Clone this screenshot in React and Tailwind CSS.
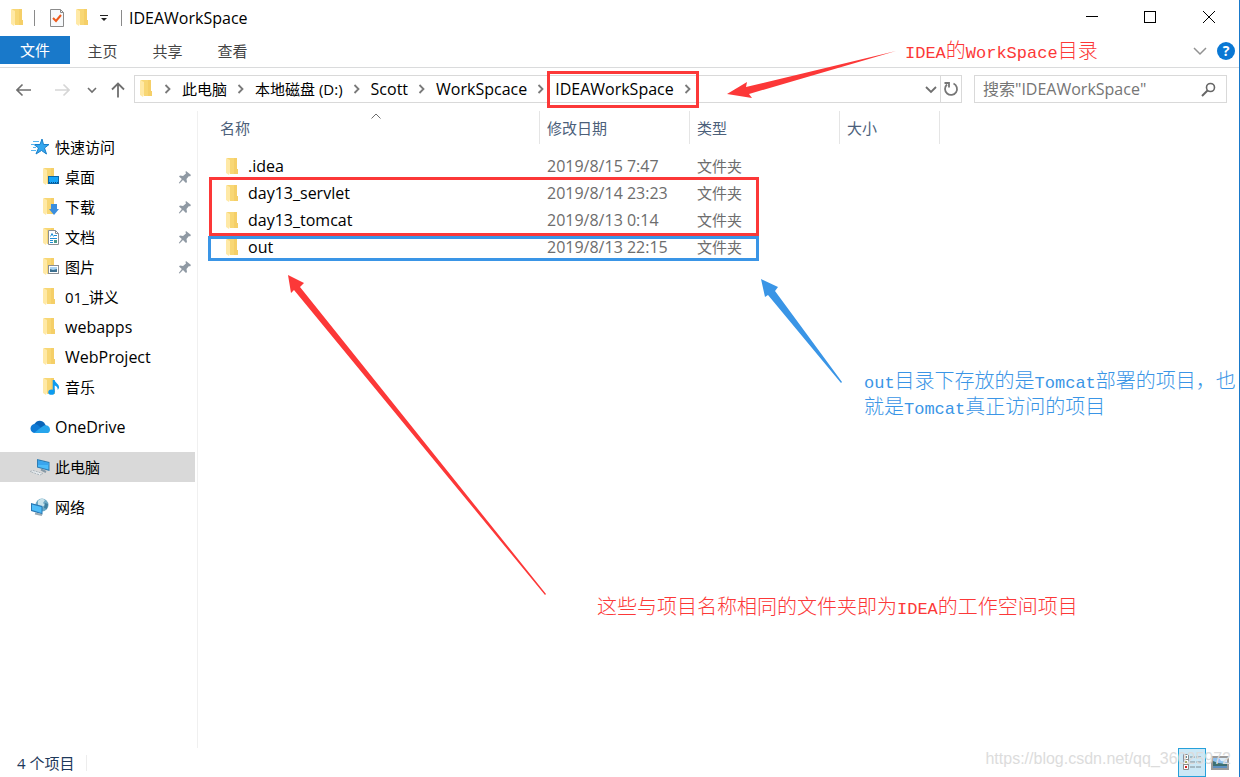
const quickAccess = [
    { name: "桌面", overlay: "desktop", pinned: true },
    { name: "下载", overlay: "download", pinned: true },
    { name: "文档", overlay: "document", pinned: true },
    { name: "图片", overlay: "picture", pinned: true },
    { name: "01_讲义" },
    { name: "webapps", latin: true },
    { name: "WebProject", latin: true },
    { name: "音乐", overlay: "music" },
];

const crumbs = [
    { name: "此电脑" },
    { name: "本地磁盘 (D:)" },
    { name: "Scott", latin: true },
    { name: "WorkSpcace", latin: true },
    { name: "IDEAWorkSpace", latin: true },
];

const files = [
    { name: ".idea", date: "2019/8/15 7:47", type: "文件夹" },
    { name: "day13_servlet", date: "2019/8/14 23:23", type: "文件夹" },
    { name: "day13_tomcat", date: "2019/8/13 0:14", type: "文件夹" },
    { name: "out", date: "2019/8/13 22:15", type: "文件夹" },
];

function FolderIcon({ overlay }) {
    return (
        <svg width="18" height="18" viewBox="0 0 18 18" className="shrink-0" aria-hidden="true">
            <path d="M1 0h10v11l1 1v4H4z" fill="#f8d775" />
            <path d="M8 0h3v11h1v5H8z" fill="#f5cf68" />
            <path d="M0 0l4 2v12l-1 3-3-2z" fill="#ffe9a6" />
            {overlay === "desktop" && (
                <g>
                    <rect x="5.5" y="8.5" width="10" height="7" fill="#18a5f7" stroke="#0b66a8" />
                    <path d="M6 14.5h9" stroke="#0b4f86" strokeDasharray="1 1" />
                </g>
            )}
            {overlay === "download" && <path d="M8 6h6v5h2l-5 6-5-6h2z" fill="#3b8ede" />}
            {overlay === "document" && (
                <g>
                    <path d="M5.5 2.5h7l3 3v11h-10z" fill="#fff" stroke="#8a8f94" />
                    <path d="M12.5 2.5v3h3" fill="none" stroke="#8a8f94" />
                    <path d="M7.5 8.5l1.5-3 1.5 3M11 7.5h3M7 10.5h7M7 12.5h3" fill="none" stroke="#1f8fd6" />
                    <path d="M11 12h3v3h-3z" fill="#4d9b8b" />
                    <path d="M7 14.5h3" stroke="#1f8fd6" />
                </g>
            )}
            {overlay === "picture" && (
                <g>
                    <rect x="5.5" y="7.5" width="10" height="8" fill="#fff" stroke="#8a8f94" />
                    <path d="M7 9h7v5H7z" fill="#a9d3f2" />
                    <path d="M7 11l3 1 4-1v3H7z" fill="#3c6f8f" />
                </g>
            )}
            {overlay === "music" && (
                <g fill="#0c9bf0">
                    <ellipse cx="8.5" cy="14.2" rx="3.2" ry="2.6" />
                    <path d="M9.7 2h2c.3 3 5 4 4.300 8l-1.200 2c0-3-1.800-4-3.100-4.500V14h-2z" />
                </g>
            )}
        </svg>
    );
}

function PinIcon() {
    return (
        <svg width="14" height="14" viewBox="0 0 14 14" className="shrink-0" aria-hidden="true">
            <path d="M8 1l5 4-1 1.5-1-.5-2.500 3 .5 3-1 1-3-3L1.500 13.500.8 13l3-4L1 6.500l1-1 3 .5 3-2.500L7.500 2z" fill="#8f99a3" />
        </svg>
    );
}

function StarIcon() {
    return (
        <svg width="20" height="18" viewBox="0 0 20 18" className="shrink-0" aria-hidden="true">
            <path d="M12 1l1.500 5.500H19l-4.500 3.500 2 6-5-3.500L6 16l2.500-6L4 6.500h6z" fill="#35a7ee" stroke="#1a7fc9" />
            <path d="M3 3.500h6M1 6.500h4M3 9.500h3M1 12.500h5" stroke="#56b4ef" />
        </svg>
    );
}

function CloudIcon() {
    return (
        <svg width="20" height="14" viewBox="0 0 20 14" className="shrink-0" aria-hidden="true">
            <path d="M4 5C6 0 12-1 15 4l1 2-6 3-8 1z" fill="#0a64b8" />
            <path d="M5 13a4.500 4.500 0 0 1 0-9c2 0 3 1 5 3l5 5z" fill="#0f7ad4" />
            <path d="M11 7.500l3-2c3-1 6 1 6 4s-2 3.500-3 3.500H4z" fill="#27a5ec" />
        </svg>
    );
}

function ComputerIcon() {
    return (
        <svg width="20" height="18" viewBox="0 0 20 18" className="shrink-0" aria-hidden="true">
            <path d="M7 1l12.500 3v9L7 9.500z" fill="#2f7db3" />
            <path d="M8 2.500l10.500 2.500v6.500L8 8.800z" fill="#4cbcfa" />
            <path d="M8 2.500l10.500 2.500v2L8 7z" fill="#3aa5ee" />
            <path d="M11 11.500l5 2.500" stroke="#8799a6" strokeWidth="2" />
            <path d="M0 13.500l3-1 10 3-3 1.500z" fill="#e9eef1" stroke="#aab4bb" strokeDasharray="2 1" />
        </svg>
    );
}

function NetworkIcon() {
    return (
        <svg width="20" height="18" viewBox="0 0 20 18" className="shrink-0" aria-hidden="true">
            <circle cx="12" cy="7" r="6.500" fill="#6da9c4" />
            <path d="M8 3c2-3 6-2 7-1l-2 3 2 2-3 2-4-2z" fill="#c8e2ea" />
            <path d="M15 5l3 1-1 5-3-1z" fill="#3f7f9f" />
            <path d="M1 5l11.500 3v8.500L1 13z" fill="#2878b4" />
            <path d="M2 6.500l9.500 2.500v6L2 12z" fill="#4fbdf8" />
            <path d="M5 15.500l7 1.500" stroke="#98a9b4" strokeWidth="2" />
        </svg>
    );
}

function Chevron({ className = "" }) {
    return (
        <svg width="28" height="12" viewBox="0 0 28 12" className={`shrink-0 ${className}`} fill="none" aria-hidden="true">
            <path d="M11.500 2l4 4-4 4" stroke="#7a7a7a" strokeWidth="1.800" />
        </svg>
    );
}

function TitleBar() {
    return (
        <header className="flex h-9 items-center">
            <div className="flex flex-1 items-center pb-px pl-[11px]">
                <FolderIcon />
                <span className="ml-[5px] h-4 w-px bg-[#8a8a8a]" />
                <button aria-label="属性" className="ml-[14px]">
                    <svg width="16" height="18" viewBox="0 0 16 18" fill="none">
                        <path d="M1.500.5h10l3 3v14h-13z" fill="#f7f9fb" stroke="#8b8b8b" />
                        <path d="M11.500.5v3h3" stroke="#8b8b8b" />
                        <path d="M4 9l3 3 5-6" stroke="#ee5a1c" strokeWidth="2" />
                    </svg>
                </button>
                <button aria-label="新建文件夹" className="ml-[11px]"><FolderIcon /></button>
                <button aria-label="自定义快速访问工具栏" className="ml-[5px]">
                    <svg width="10" height="10" viewBox="0 0 10 10">
                        <path d="M1 2.500h8" stroke="#222" />
                        <path d="M2 5h6L5 8z" fill="#222" />
                    </svg>
                </button>
                <span className="ml-3 h-4 w-px bg-[#8a8a8a]" />
                <h1 className="ml-[7px] text-base">IDEAWorkSpace</h1>
            </div>
            <div className="flex h-full">
                <button aria-label="最小化" className="flex w-[58px] items-center justify-center">
                    <svg width="12" height="12" viewBox="0 0 12 12"><path d="M0 4.500h12" stroke="#000" /></svg>
                </button>
                <button aria-label="最大化" className="flex w-[58px] items-center justify-center pb-[2px]">
                    <svg width="12" height="12" viewBox="0 0 12 12"><rect x=".5" y=".5" width="11" height="11" fill="none" stroke="#000" /></svg>
                </button>
                <button aria-label="关闭" className="flex w-[60px] items-center justify-center pb-[2px]">
                    <svg width="12" height="12" viewBox="0 0 12 12"><path d="M0 0l12 12M12 0L0 12" stroke="#000" /></svg>
                </button>
            </div>
        </header>
    );
}

function RibbonTabs() {
    return (
        <div className="flex h-8 items-start border-b border-[#dadbdc]">
            <button className="h-7 w-[70px] bg-[#1979ca] text-white">文件</button>
            {["主页", "共享", "查看"].map((t) => (
                <button key={t} className="h-[30px] w-[65px] text-[#444]">{t}</button>
            ))}
            <button aria-label="展开功能区" className="mt-2 mr-[10px] ml-auto">
                <svg width="14" height="14" viewBox="0 0 14 14" fill="none"><path d="M1 4l6 6 6-6" stroke="#929292" strokeWidth="1.500" /></svg>
            </button>
            <button aria-label="帮助" className="mt-[6px] mr-1 flex size-[18px] items-center justify-center rounded-full bg-[#0a78d4] text-sm font-bold text-white">?</button>
        </div>
    );
}

function AddressRow() {
    return (
        <div className="flex h-[43px] items-center pr-3 pb-px pl-4">
            <div className="flex w-[118px] shrink-0 items-center pt-[2px] text-[#6f6f6f]">
                <button aria-label="后退">
                    <svg width="16" height="14" viewBox="0 0 16 14" fill="none"><path d="M15 7H1M6.500 1.500L1 7l5.500 5.500" stroke="currentColor" strokeWidth="1.600" /></svg>
                </button>
                <button aria-label="前进" className="ml-[22px] text-[#d6d6d6]">
                    <svg width="16" height="14" viewBox="0 0 16 14" fill="none"><path d="M1 7h14M9.500 1.500L15 7l-5.500 5.500" stroke="currentColor" strokeWidth="1.600" /></svg>
                </button>
                <button aria-label="最近浏览的位置" className="ml-[17px]">
                    <svg width="10" height="10" viewBox="0 0 10 10" fill="none"><path d="M1 3l4 4 4-4" stroke="currentColor" strokeWidth="1.600" /></svg>
                </button>
                <button aria-label="上移" className="ml-[13px]">
                    <svg width="16" height="16" viewBox="0 0 16 16" fill="none"><path d="M8 15.500V1.500M2 7.500l6-6 6 6" stroke="currentColor" strokeWidth="1.800" /></svg>
                </button>
            </div>
            <nav aria-label="地址" className="flex h-7 flex-1 items-center border border-[#d9d9d9] pl-[5px]">
                <FolderIcon />
                <Chevron className="-ml-1" />
                {crumbs.map((c) => (
                    <div key={c.name} className="flex items-center">
                        <button className={`whitespace-nowrap ${c.latin ? "text-base" : ""}`}>{c.name}</button>
                        <Chevron />
                    </div>
                ))}
                <button aria-label="以前的位置" className="mr-[3px] ml-auto">
                    <svg width="12" height="12" viewBox="0 0 12 12" fill="none"><path d="M1 4l5 5 5-5" stroke="#6f6f6f" strokeWidth="1.800" /></svg>
                </button>
                <button aria-label="刷新" className="flex h-full w-[21px] items-center justify-center border-l border-[#d9d9d9]">
                    <svg width="16" height="16" viewBox="0 0 16 16" fill="none">
                        <path d="M10.500 2.500A6 6 0 1 1 4 3.500" stroke="#767676" strokeWidth="1.800" />
                        <path d="M1.500 2h4.500v4.500" stroke="#767676" strokeWidth="1.800" />
                    </svg>
                </button>
            </nav>
            <label className="ml-3 flex h-7 w-[253px] items-center border border-[#d9d9d9] pr-[10px] pl-2">
                <input aria-label="搜索" placeholder={'搜索"IDEAWorkSpace"'} className="min-w-0 flex-1 text-base outline-none placeholder:text-[#757575]" />
                <svg width="15" height="15" viewBox="0 0 15 15" fill="none">
                    <circle cx="9.500" cy="5.500" r="4" stroke="#666" strokeWidth="1.600" />
                    <path d="M6.500 8.500L1 14" stroke="#666" strokeWidth="2" />
                </svg>
            </label>
        </div>
    );
}

function Sidebar() {
    return (
        <aside className="w-[198px] shrink-0 border-r border-[#f0f0f0] pt-[21px]">
            <a href="#quick" className="flex h-[30px] items-center gap-[5px] pl-[30px]"><StarIcon />快速访问</a>
            <ul>
                {quickAccess.map((q) => (
                    <li key={q.name}>
                        <a href="#folder" className="flex h-[30px] items-center pr-[5px] pl-[43px]">
                            <FolderIcon overlay={q.overlay} />
                            <span className={`ml-1 flex-1 ${q.latin ? "text-base" : ""}`}>{q.name}</span>
                            {q.pinned && <PinIcon />}
                        </a>
                    </li>
                ))}
            </ul>
            <a href="#onedrive" className="mt-[10px] flex h-[30px] items-center gap-[5px] pl-[30px] text-base"><CloudIcon />OneDrive</a>
            <a href="#pc" className="mt-[10px] mr-[2px] flex h-[30px] items-center gap-[5px] bg-[#d9d9d9] pl-[30px]"><ComputerIcon />此电脑</a>
            <a href="#network" className="mt-[10px] flex h-[30px] items-center gap-[5px] pl-[30px]"><NetworkIcon />网络</a>
        </aside>
    );
}

function FileTable() {
    const head = "h-[33px] border-r border-[#e5e5e5] leading-[34px]";
    return (
        <table className="w-[742px] table-fixed border-collapse self-start text-left">
            <thead className="text-[#4c607a]">
                <tr>
                    <th className="relative w-[342px] p-0 pb-[9px] font-normal">
                        <div className={`${head} pl-[22px]`}>名称</div>
                        <svg width="10" height="6" viewBox="0 0 10 6" fill="none" className="absolute top-[2px] left-[173px]">
                            <path d="M.5 5.500L5 1l4.500 4.500" stroke="#6d6d6d" />
                        </svg>
                    </th>
                    <th className="w-[150px] p-0 pb-[9px] font-normal"><div className={`${head} pl-[7px]`}>修改日期</div></th>
                    <th className="w-[150px] p-0 pb-[9px] font-normal"><div className={`${head} pl-[7px]`}>类型</div></th>
                    <th className="w-[100px] p-0 pb-[9px] font-normal"><div className={`${head} pl-[7px]`}>大小</div></th>
                </tr>
            </thead>
            <tbody>
                {files.map((f) => (
                    <tr key={f.name} className="h-[27px] leading-[27px] text-[#6d6d6d]">
                        <td className="p-0">
                            <div className="flex items-center pl-7 text-base leading-[27px] text-black">
                                <FolderIcon />
                                <span className="ml-1">{f.name}</span>
                            </div>
                        </td>
                        <td className="p-0 pl-[7px] text-base leading-[27px]">{f.date}</td>
                        <td className="p-0 pl-[7px]">{f.type}</td>
                        <td className="p-0" />
                    </tr>
                ))}
            </tbody>
        </table>
    );
}

function StatusBar() {
    return (
        <footer className="flex h-[29px] items-center pr-[10px] pl-[17px]">
            <span className="border-r border-[#ededed] pr-3 leading-4 text-[#1e395b]">4 个项目</span>
            <button aria-label="详细信息" className="ml-auto flex h-full w-7 items-center justify-center border border-[#26a0da] bg-[#cbe8f6]">
                <svg width="20" height="17" viewBox="0 0 20 17" fill="none">
                    <path d="M1.500.5h5v5h-5zM1.500 5.500h5v5h-5zM1.500 10.500h5v5h-5z" fill="#fff" stroke="#8c8c8c" />
                    <path d="M3 2h2v2H3z" fill="#3c8a9a" />
                    <path d="M3 7h2v2H3z" fill="#9aa86a" />
                    <path d="M3 12h2v2H3z" fill="#d02020" />
                    <path d="M8 3h5M14 3h5M8 8h5M14 8h5M8 13h5M14 13h5" stroke="#7d8a92" />
                </svg>
            </button>
            <button aria-label="大缩略图" className="ml-[5px]">
                <svg width="18" height="14" viewBox="0 0 18 14">
                    <path d="M1 1h16v12H1z" fill="#fff" stroke="#9a9a9a" strokeWidth="2" />
                    <path d="M2 2h14v10H2z" fill="#8dc0f0" />
                    <path d="M8 2h8v4l-6-1z" fill="#dcedfa" />
                    <path d="M2 5l5 2 9 1v2H2z" fill="#3f6f70" />
                    <path d="M2 10h14v2H2z" fill="#5c8fc0" />
                </svg>
            </button>
        </footer>
    );
}

// SimSun-like note text: latin glyphs are half as wide as the CJK ones
function Latin({ children }) {
    return <span className="text-[17px] font-normal">{children}</span>;
}

function Annotations() {
    const note = "absolute text-xl leading-[25px] font-light font-['Liberation_Mono','Noto_Sans_CJK_SC',monospace] whitespace-nowrap";
    return (
        <div className="pointer-events-none absolute inset-0">
            <div className="absolute top-[71px] left-[547px] h-[37px] w-[152px] border-3 border-[#fc3838]" />
            <div className="absolute top-[177px] left-[209px] h-[59px] w-[550px] border-3 border-[#fc3838]" />
            <div className="absolute top-[236px] left-[208px] h-[25px] w-[551px] border-3 border-[#3a95e6]" />
            <svg width="1240" height="777" viewBox="0 0 1240 777" className="absolute top-0 left-0" aria-hidden="true">
                <path d="M727 94l20-12-1 5 150-36-147 43 3 4z" fill="#fc3838" />
                <path d="M288 275l16 8-4 4 246 307-1 1L294 290l-3 3z" fill="#fc3838" />
                <path d="M761 279l17 8-3 4 67 91-1 1-73-88-3 2z" fill="#3a95e6" />
            </svg>
            <p className={`${note} top-[40px] left-[905px] text-[#fc3838]`}><Latin>IDEA</Latin>的<Latin>WorkSpace</Latin>目录</p>
            <p className={`${note} top-[370px] left-[864px] text-[#3a95e6]`}>
                <Latin>out</Latin>目录下存放的是<Latin>Tomcat</Latin>部署的项目，也<br />
                就是<Latin>Tomcat</Latin>真正访问的项目
            </p>
            <p className={`${note} top-[596px] left-[597px] text-[#fc3838]`}>这些与项目名称相同的文件夹即为<Latin>IDEA</Latin>的工作空间项目</p>
            <p className="absolute right-2 bottom-[6px] font-['Liberation_Sans',sans-serif] text-base text-[#dcdcdc]">https://blog.csdn.net/qq_36025972</p>
        </div>
    );
}

export default function App() {
    return (
        <div className="relative flex min-h-screen flex-col border-r border-[#1979ca] bg-white font-['Open_Sans','Noto_Sans_CJK_SC',sans-serif] text-[15px] text-black">
            <TitleBar />
            <RibbonTabs />
            <AddressRow />
            <main className="flex flex-1">
                <Sidebar />
                <FileTable />
            </main>
            <StatusBar />
            <Annotations />
        </div>
    );
}
